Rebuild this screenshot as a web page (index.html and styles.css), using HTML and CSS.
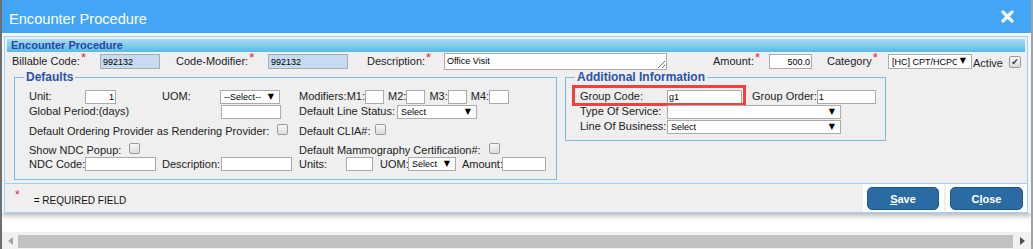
FILE: index.html
```html
<!DOCTYPE html>
<html lang="en">
<head>
  <meta charset="UTF-8" />
  <title>Encounter Procedure</title>
  <link rel="stylesheet" href="styles.css">
</head>
<body>

  <div class="dialog">
    <div class="titlebar">
      <span class="title">Encounter Procedure</span>
      <span class="close-x">
        <svg width="13" height="13" viewBox="0 0 13 13"><path d="M2 2L11 11M11 2L2 11" /></svg>
      </span>
    </div>

    <div class="dialog-body">
      <div class="panel">
        <div class="panel-head">Encounter Procedure</div>

        <!-- main procedure fields -->
        <div class="main-row">
          <span class="lbl w88">Billable Code:<span class="req">*</span></span>
          <input class="txt ro w60" value="992132" readonly />
          <span class="lbl w92 ml16">Code-Modifier:<span class="req">*</span></span>
          <input class="txt ro w80" value="992132" readonly />
          <span class="lbl w77 ml19">Description:<span class="req">*</span></span>
          <textarea class="desc">Office Visit</textarea>
          <span class="lbl w56 ml46">Amount:<span class="req">*</span></span>
          <input class="txt num w43" value="500.0" />
          <span class="lbl w61 ml15">Category<span class="req">*</span></span>
          <div class="sel w84"><select><option>[HC] CPT/HCPCS</option></select></div>
          <span class="lbl active">Active</span>
          <input type="checkbox" class="chk big" checked />
        </div>

        <div class="fields">
          <fieldset class="defaults">
            <legend>Defaults</legend>
            <div class="fs-body">
              <div class="line">
                <span class="lbl w56">Unit:</span>
                <input class="txt num w31" value="1" />
                <span class="lbl w58 ml46">UOM:</span>
                <div class="sel w60"><select><option>--Select--</option></select></div>
              </div>
              <div class="line">
                <span class="lbl">Modifiers:M1:</span>
                <input class="txt w19" />
                <span class="lbl ml4">M2:</span>
                <input class="txt w19" />
                <span class="lbl ml4">M3:</span>
                <input class="txt w19" />
                <span class="lbl ml4">M4:</span>
                <input class="txt w20" />
              </div>

              <div class="line">
                <span class="lbl w192">Global Period:(days)</span>
                <input class="txt w60" />
              </div>
              <div class="line">
                <span class="lbl">Default Line Status:</span>
                <div class="sel w80 ml2"><select><option>Select</option></select></div>
              </div>

              <div class="line boxed r3">
                <span class="lbl">Default Ordering Provider as Rendering Provider:</span>
                <input type="checkbox" class="chk" />
              </div>
              <div class="line boxed r3">
                <span class="lbl">Default CLIA#:</span>
                <input type="checkbox" class="chk near" />
              </div>

              <div class="line boxed r4">
                <span class="lbl">Show NDC Popup:</span>
                <input type="checkbox" class="chk" />
              </div>
              <div class="line boxed r4">
                <span class="lbl">Default Mammography Certification#:</span>
                <input type="checkbox" class="chk" />
              </div>

              <div class="line">
                <span class="lbl w56">NDC Code:</span>
                <input class="txt w71" />
                <span class="lbl w59 ml6">Description:</span>
                <input class="txt w71" />
              </div>
              <div class="line">
                <span class="lbl w47">Units:</span>
                <input class="txt w27" />
                <span class="lbl w28 ml7">UOM:</span>
                <div class="sel w48"><select><option>Select</option></select></div>
                <span class="lbl w40 ml6">Amount:</span>
                <input class="txt w44" />
              </div>
            </div>
          </fieldset>

          <fieldset class="additional">
            <legend>Additional Information</legend>
            <div class="fs-body">
              <div class="line group-row">
                <span class="lbl w87">Group Code:</span>
                <input class="txt w75" value="g1" />
                <span class="lbl ml10">Group Order:</span>
                <input class="txt w59" value="1" />
                <span class="highlight"></span>
              </div>
              <div class="line">
                <span class="lbl w87">Type Of Service:</span>
                <div class="sel w174"><select><option></option></select></div>
              </div>
              <div class="line">
                <span class="lbl w87">Line Of Business:</span>
                <div class="sel w174"><select><option>Select</option></select></div>
              </div>
            </div>
          </fieldset>
        </div>
      </div>

      <div class="footer">
        <div class="note"><span class="req">*</span>= REQUIRED FIELD</div>
        <div class="btn-cell"><button class="btn"><u>S</u>ave</button></div>
        <div class="btn-cell"><button class="btn wide">C<u>l</u>ose</button></div>
      </div>
    </div>
  </div>

  <div class="hscroll">
    <span class="arrow left"></span>
    <div class="thumb"></div>
    <span class="arrow right"></span>
  </div>

</body>
</html>
```

FILE: styles.css
```css
* {
  box-sizing: border-box;
}

body {
  margin: 0;
  width: 1033px;
  height: 249px;
  overflow: hidden;
  background: #fff;
  border-left: 2px solid #6e6e6e;
  border-right: 2px solid #a2a2a2;
  font-family: "Liberation Sans", Arial, sans-serif;
  font-size: 11px;
  color: #222;
}

.dialog {
  background: #f3f6f9;
  box-shadow: 0 3px 5px rgba(0,0,0,0.28);
}

.titlebar {
  height: 33px;
  background: #42a5f5;
  display: flex;
  align-items: center;
  padding: 0 17px 0 7px;
  color: #fff;
}

.title {
  font-size: 14.6px;
  padding-top: 5px;
}

.close-x {
  margin-left: auto;
  display: flex;
}

.close-x path {
  stroke: #eef6fd;
  stroke-width: 3.3;
  stroke-linecap: round;
}

.dialog-body {
  margin: 3px 3px 0 2px;
  border: 1px solid #a3cff4;
  background: #efefef;
}

.panel {
  padding: 2px 2px 3px;
  border-bottom: 1px solid #a3cff4;
}

.panel-head {
  height: 13px;
  line-height: 13px;
  padding-left: 4px;
  background: linear-gradient(#a8def6, #54bbe7);
  color: #2f44a2;
  font-weight: bold;
  font-size: 11px;
}

.main-row {
  display: flex;
  align-items: center;
  height: 17px;
  margin-top: 1px;
  padding-left: 5px;
}

.lbl {
  flex: none;
  white-space: nowrap;
  line-height: 13px;
}

.req {
  color: #e8222a;
  font-size: 13px;
  vertical-align: 3px;
  line-height: 0;
  margin-left: 1px;
}

.active {
  align-self: flex-end;
  width: 36px;
  margin-left: 1px;
}

/* inputs */
.txt {
  flex: none;
  height: 14px;
  border: 1px solid #ababab;
  background: #fff;
  font: 9px "Liberation Sans", Arial, sans-serif;
  color: #000;
  padding: 0 1px;
  margin: 0;
  outline: none;
}

.main-row .txt {
  height: 15px;
}

.txt.ro {
  background: #c6daf2;
  padding-left: 2px;
}

.txt.num {
  text-align: right;
}

.desc {
  flex: none;
  width: 223px;
  height: 17px;
  margin: 0;
  border: 1px solid #ababab;
  font: 9px "Liberation Sans", Arial, sans-serif;
  color: #000;
  padding: 2px 2px 0;
  overflow: hidden;
  resize: both;
}

.sel {
  flex: none;
  position: relative;
  display: flex;
  height: 14px;
  border: 1px solid #ababab;
  background: #fff;
}

.main-row .sel {
  height: 15px;
}

.sel select {
  appearance: none;
  -webkit-appearance: none;
  border: 0;
  background: transparent;
  width: 100%;
  height: 100%;
  margin: 0;
  padding: 0 14px 0 3px;
  font: 9px "Liberation Sans", Arial, sans-serif;
  color: #000;
  outline: none;
}

.sel::after {
  content: "\25BC";
  position: absolute;
  right: 5px;
  top: 1px;
  font: 8px/10px "DejaVu Sans", sans-serif;
  color: #000;
  pointer-events: none;
}

.chk {
  appearance: none;
  -webkit-appearance: none;
  flex: none;
  width: 11px;
  height: 11px;
  margin: 0 0 0 8px;
  border: 1px solid #9b9b9b;
  border-radius: 2px;
  background: linear-gradient(#f7f7f7, #dcdcdc);
}

.chk.near {
  margin-left: 4px;
}

.chk.big {
  width: 12px;
  height: 12px;
  margin: 0;
}

.chk:checked::before {
  content: "\2714";
  display: block;
  font: 9px/10px "DejaVu Sans", sans-serif;
  color: #3a3a3a;
  text-align: center;
}

/* fieldsets */
.fields {
  display: flex;
  align-items: flex-start;
  padding-left: 7px;
}

fieldset {
  margin: 0;
  padding: 0;
  min-width: 0;
  border: 1px solid #7dbce8;
}

legend {
  margin-left: 9px;
  padding: 0 2px;
  font-weight: bold;
  font-size: 12px;
  line-height: 14px;
  color: #2a52ac;
}

.defaults {
  width: 543px;
}

.defaults .fs-body {
  display: grid;
  grid-template-columns: 270px auto;
  grid-template-rows: 15px 15px 20px 17px 16px;
  padding: 5px 0 7px 14px;
}

.additional {
  width: 321px;
  margin-left: 8px;
}

.additional .fs-body {
  display: grid;
  grid-template-rows: 15px 15px 15px;
  padding: 5px 0 6px 14px;
}

.line {
  display: flex;
  align-items: center;
}

.line.boxed {
  align-items: baseline;
}

.r3 {
  padding-top: 5px;
}

.r4 {
  padding-top: 4px;
}

.group-row {
  position: relative;
}

.highlight {
  position: absolute;
  left: -8px;
  top: -4px;
  width: 174px;
  height: 21px;
  border: 3px solid #f2403f;
  pointer-events: none;
}

/* widths */
.w19 { width: 19px; }
.w20 { width: 20px; }
.w27 { width: 27px; }
.w28 { width: 28px; }
.w31 { width: 31px; }
.w40 { width: 40px; }
.w43 { width: 43px; }
.w44 { width: 44px; }
.w47 { width: 47px; }
.w48 { width: 48px; }
.w56 { width: 56px; }
.w58 { width: 58px; }
.w59 { width: 59px; }
.w60 { width: 60px; }
.w61 { width: 61px; }
.w71 { width: 71px; }
.w75 { width: 75px; }
.w77 { width: 77px; }
.w80 { width: 80px; }
.w84 { width: 84px; }
.w87 { width: 87px; }
.w88 { width: 88px; }
.w92 { width: 92px; }
.w174 { width: 174px; }
.w192 { width: 192px; }

.ml2 { margin-left: 2px; }
.ml4 { margin-left: 4px; }
.ml6 { margin-left: 6px; }
.ml7 { margin-left: 7px; }
.ml10 { margin-left: 10px; }
.ml15 { margin-left: 15px; }
.ml16 { margin-left: 16px; }
.ml19 { margin-left: 19px; }
.ml46 { margin-left: 46px; }

/* footer */
.footer {
  display: flex;
  height: 28px;
}

.note {
  flex: 1;
  display: flex;
  align-items: center;
  padding: 4px 0 0 10px;
  font-size: 10px;
  color: #111;
}

.note .req {
  font-size: 12px;
  margin: 0 14px 0 0;
  vertical-align: 0;
  position: relative;
  top: -5px;
}

.btn-cell {
  background: #fff;
  width: 81px;
  padding: 3px 0 0 4px;
  margin-left: 2px;
}

.btn {
  width: 72px;
  height: 23px;
  padding: 0;
  background: #2b6ba3;
  border: 1px solid #1f5a8d;
  border-radius: 5px;
  color: #fff;
  font: bold 11px "Liberation Sans", Arial, sans-serif;
}

.btn.wide {
  width: 73px;
}

/* page scrollbar */
.hscroll {
  margin-top: 19px;
  height: 17px;
  background: #f1f1f1;
  display: flex;
}

.arrow {
  display: flex;
  align-items: center;
  justify-content: center;
  width: 16px;
}

.arrow.right {
  width: 18px;
}

.arrow.left::before {
  content: "";
  border-right: 5px solid #a3a3a3;
  border-top: 4px solid transparent;
  border-bottom: 4px solid transparent;
}

.arrow.right::before {
  content: "";
  border-left: 5px solid #505050;
  border-top: 4px solid transparent;
  border-bottom: 4px solid transparent;
}

.thumb {
  flex: 1;
  height: 13px;
  margin-top: 3px;
  background: #c1c1c1;
}
```
